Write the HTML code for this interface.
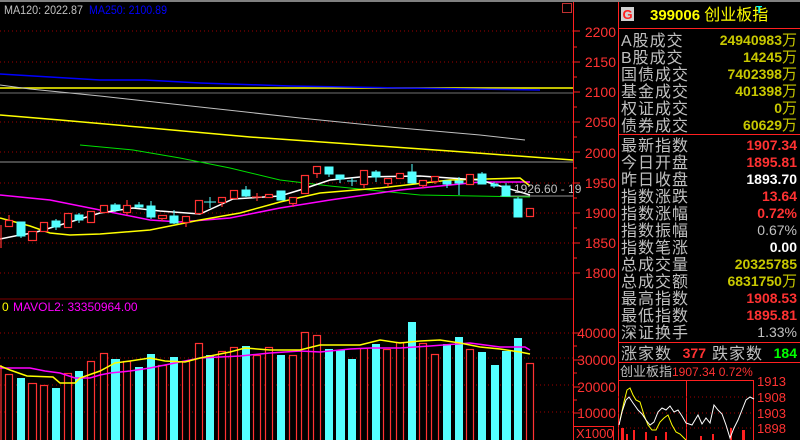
<!DOCTYPE html>
<html><head><meta charset="utf-8"><style>
html,body{margin:0;padding:0;background:#000;width:800px;height:440px;overflow:hidden}
svg{display:block}
.l{font-family:"Liberation Sans","Noto Sans CJK SC",sans-serif;font-size:16px;fill:#c0c0c0;letter-spacing:1px}
.v{font-family:"Liberation Sans",sans-serif;font-size:14px;font-weight:bold;text-anchor:end}
.ax{font-family:"Liberation Sans",sans-serif;font-size:14px;fill:#ff3232}
</style></head><body>
<svg width="800" height="440" viewBox="0 0 800 440" xmlns="http://www.w3.org/2000/svg">
<rect width="800" height="440" fill="#000"/>
<rect x="0" y="0" width="800" height="2" fill="#808080"/>
<g stroke="#a00000" stroke-dasharray="1,3" stroke-width="1">
<line x1="0" y1="31" x2="573" y2="31"/><line x1="0" y1="62" x2="573" y2="62"/><line x1="0" y1="93" x2="573" y2="93"/>
<line x1="0" y1="122" x2="573" y2="122"/><line x1="0" y1="152" x2="573" y2="152"/><line x1="0" y1="183" x2="573" y2="183"/>
<line x1="0" y1="213" x2="573" y2="213"/><line x1="0" y1="243" x2="573" y2="243"/><line x1="0" y1="273" x2="573" y2="273"/>
<line x1="0" y1="333" x2="573" y2="333"/><line x1="0" y1="358" x2="573" y2="358"/><line x1="0" y1="385" x2="573" y2="385"/><line x1="0" y1="412" x2="573" y2="412"/>
</g>
<line x1="0" y1="299" x2="573" y2="299" stroke="#800000"/>
<text x="4" y="14" font-family="Liberation Sans" font-size="12" fill="#c0c0c0" textLength="79" lengthAdjust="spacingAndGlyphs">MA120: 2022.87</text>
<text x="89" y="14" font-family="Liberation Sans" font-size="12" fill="#0000ff" textLength="78" lengthAdjust="spacingAndGlyphs">MA250: 2100.89</text>
<rect x="562.5" y="3.5" width="9" height="9" fill="none" stroke="#c03030"/>
<line x1="0" y1="88" x2="573" y2="88" stroke="#ffff00" stroke-width="1.5"/>
<line x1="0" y1="93" x2="573" y2="93" stroke="#707070"/>
<line x1="0" y1="162" x2="573" y2="162" stroke="#909090"/>
<polyline fill="none" stroke="#0000ff" stroke-width="1.5" points="0,74 50,77 100,80 145,80 200,83 290,86 400,88 540,90"/>
<polyline fill="none" stroke="#c0c0c0" points="0,85 30,89 100,96 200,107 300,118 400,128 480,135 525,140"/>
<polyline fill="none" stroke="#ffff00" stroke-width="1.5" points="0,115 60,120 150,128 250,137 350,144 450,151 573,160"/>
<polyline fill="none" stroke="#00e000" points="80,145 133,150 180,158 230,168 280,180 330,186 420,195 530,197"/>
<line x1="500" y1="196" x2="573" y2="196" stroke="#909090"/>
<polyline fill="none" stroke="#ff00ff" stroke-width="1.5" points="0,195 50,200 100,210 150,220 180,222 230,218 280,208 330,200 400,190 480,182 530,182"/>
<polyline fill="none" stroke="#ffff00" stroke-width="1.5" points="0,218 30,226 50,233 70,235 100,234 150,230 200,220 240,213 280,202 320,193 380,188 450,180 520,178 530,186"/>
<polyline fill="none" stroke="#ffffff" stroke-width="1.5" points="0,239 20,235 33,233 50,228 100,213 133,208 160,211 200,214 233,199 280,196 300,190 330,180 360,177 420,176 480,180 530,195"/>
<g stroke="#ff3232" fill="#000" stroke-width="1.2">
<line x1="1" y1="225" x2="1" y2="248"/>
<line x1="9" y1="215" x2="9" y2="220"/><rect x="5.5" y="220.5" width="7" height="6"/>
<rect x="28.5" y="231.5" width="8" height="9"/>
<rect x="40.5" y="222.5" width="7" height="9"/>
<rect x="64.5" y="213.5" width="7" height="14"/>
<rect x="87.5" y="211.5" width="7" height="11"/>
<rect x="100.5" y="205.5" width="7" height="7"/>
<line x1="127" y1="200" x2="127" y2="215"/><rect x="123.5" y="205.5" width="7" height="7"/>
<line x1="162" y1="218" x2="162" y2="221"/><rect x="158.5" y="215.5" width="8" height="3"/>
<line x1="186" y1="222" x2="186" y2="227"/><rect x="182.5" y="216.5" width="7" height="6"/>
<rect x="195.5" y="200.5" width="7" height="13"/>
<line x1="222" y1="202" x2="222" y2="207"/><rect x="218.5" y="197.5" width="7" height="5"/>
<rect x="230.5" y="190.5" width="7" height="8"/>
<line x1="252" y1="197" x2="262" y2="197"/><line x1="257" y1="193" x2="257" y2="201"/>
<rect x="265.5" y="194.5" width="7" height="3"/>
<line x1="293" y1="203" x2="293" y2="207"/><rect x="289.5" y="197.5" width="7" height="6"/>
<rect x="301.5" y="175.5" width="7" height="18"/>
<line x1="317" y1="173" x2="317" y2="178"/><rect x="313.5" y="166.5" width="7" height="7"/>
<line x1="364" y1="184" x2="364" y2="188"/><rect x="360.5" y="170.5" width="7" height="14"/>
<line x1="388" y1="183" x2="388" y2="187"/><rect x="384.5" y="178.5" width="7" height="5"/>
<rect x="396.5" y="173.5" width="7" height="5"/>
<line x1="423" y1="185" x2="423" y2="188"/><rect x="419.5" y="180.5" width="7" height="5"/>
<line x1="435" y1="181" x2="435" y2="184"/><rect x="431.5" y="176.5" width="7" height="5"/>
<rect x="466.5" y="174.5" width="7" height="10"/>
<rect x="526.5" y="208.5" width="7" height="8"/>
</g>
<g stroke="#54ffff" fill="#54ffff" stroke-width="1">
<rect x="17" y="222" width="8" height="14"/><line x1="21" y1="236" x2="21" y2="238"/>
<rect x="52" y="221" width="8" height="6"/><line x1="56" y1="219" x2="56" y2="230"/>
<rect x="75" y="215" width="8" height="5"/><line x1="79" y1="213" x2="79" y2="223"/>
<rect x="111" y="205" width="9" height="5"/><line x1="115" y1="203" x2="115" y2="212"/>
<rect x="135" y="205" width="8" height="2"/><line x1="139" y1="202" x2="139" y2="208"/>
<rect x="147" y="206" width="8" height="11"/><line x1="151" y1="201" x2="151" y2="219"/>
<rect x="170" y="216" width="8" height="7"/><line x1="174" y1="210" x2="174" y2="224"/>
<line x1="204" y1="202" x2="216" y2="202"/><line x1="210" y1="197" x2="210" y2="208"/>
<rect x="242" y="190" width="8" height="6"/><line x1="246" y1="186" x2="246" y2="197"/>
<rect x="277" y="191" width="8" height="9"/>
<rect x="325" y="167" width="8" height="7"/><line x1="329" y1="167" x2="329" y2="177"/>
<rect x="336" y="175" width="8" height="4"/><line x1="340" y1="175" x2="340" y2="183"/>
<line x1="347" y1="181" x2="357" y2="181"/><line x1="352" y1="178" x2="352" y2="186"/>
<rect x="372" y="172" width="8" height="5"/><line x1="376" y1="170" x2="376" y2="182"/>
<rect x="408" y="172" width="8" height="11"/><line x1="412" y1="164" x2="412" y2="183"/>
<rect x="443" y="181" width="8" height="3"/><line x1="447" y1="181" x2="447" y2="188"/>
<rect x="455" y="181" width="8" height="2"/><line x1="459" y1="177" x2="459" y2="195"/>
<rect x="478" y="174" width="8" height="10"/><line x1="482" y1="172" x2="482" y2="184"/>
<rect x="491" y="184" width="7" height="2"/><line x1="494" y1="182" x2="494" y2="188"/>
<rect x="502" y="186" width="8" height="10"/><line x1="506" y1="183" x2="506" y2="196"/>
<rect x="514" y="199" width="8" height="18"/><line x1="518" y1="197" x2="518" y2="217"/>
</g>
<text x="514" y="193" font-family="Liberation Sans" font-size="12" fill="#c0c0c0">1926.60 - 19</text>
<text x="2" y="311" font-family="Liberation Sans" font-size="12" fill="#ffff00">0</text>
<text x="13" y="311" font-family="Liberation Sans" font-size="12" fill="#ff00ff">MAVOL2: 33350964.00</text>
<g stroke="#ff3232" fill="#000" stroke-width="1.2">
<line x1="1" y1="365" x2="1" y2="440"/>
<rect x="5.5" y="374.5" width="7" height="70"/><rect x="28.5" y="383.5" width="8" height="60"/><rect x="40.5" y="385.5" width="7" height="60"/>
<rect x="64.5" y="373.5" width="7" height="70"/><rect x="87.5" y="361.5" width="7" height="80"/><rect x="100.5" y="353.5" width="7" height="90"/>
<rect x="123.5" y="361.5" width="7" height="80"/><rect x="158.5" y="365.5" width="8" height="80"/><rect x="182.5" y="361.5" width="7" height="80"/>
<rect x="195.5" y="343.5" width="7" height="100"/><rect x="218.5" y="351.5" width="7" height="90"/><rect x="230.5" y="347.5" width="7" height="95"/>
<rect x="253.5" y="355.5" width="7" height="90"/><rect x="265.5" y="347.5" width="7" height="95"/><rect x="289.5" y="355.5" width="7" height="90"/>
<rect x="301.5" y="332.5" width="7" height="110"/><rect x="313.5" y="335.5" width="7" height="110"/><rect x="360.5" y="348.5" width="7" height="95"/>
<rect x="383.5" y="349.5" width="7" height="95"/><rect x="396.5" y="342.5" width="7" height="100"/><rect x="419.5" y="343.5" width="7" height="100"/>
<rect x="431.5" y="354.5" width="7" height="90"/><rect x="466.5" y="349.5" width="7" height="95"/><rect x="526.5" y="363.5" width="7" height="80"/>
</g>
<g fill="#54ffff">
<rect x="17" y="378" width="8" height="62"/><rect x="52" y="388" width="8" height="52"/><rect x="75" y="371" width="8" height="69"/>
<rect x="111" y="359" width="9" height="81"/><rect x="135" y="367" width="8" height="73"/><rect x="147" y="354" width="8" height="86"/>
<rect x="170" y="357" width="8" height="83"/><rect x="206" y="355" width="8" height="85"/><rect x="242" y="346" width="8" height="94"/>
<rect x="277" y="355" width="8" height="85"/><rect x="325" y="349" width="8" height="91"/><rect x="336" y="350" width="9" height="90"/>
<rect x="348" y="359" width="8" height="81"/><rect x="372" y="344" width="8" height="96"/><rect x="408" y="322" width="8" height="118"/>
<rect x="443" y="344" width="8" height="96"/><rect x="455" y="337" width="8" height="103"/><rect x="478" y="352" width="8" height="88"/>
<rect x="491" y="365" width="8" height="75"/><rect x="502" y="351" width="9" height="89"/><rect x="514" y="338" width="8" height="102"/>
</g>
<polyline fill="none" stroke="#ff00ff" stroke-width="1.5" points="0,368 30,368 45,371 60,373 75,378 90,378 100,375 110,373 130,371 150,368 180,362 200,358 240,356 270,353 300,351 320,352 350,349 370,348 400,348 430,346 470,343 500,347 525,347 530,350"/>
<polyline fill="none" stroke="#ffff00" stroke-width="1.5" points="0,366 10,370 27,376 53,377 60,383 75,383 80,378 100,371 115,363 130,361 150,358 165,361 185,362 200,358 230,352 245,348 270,350 300,350 320,345 360,345 380,340 400,343 420,341 440,340 460,343 480,347 500,349 520,352 530,354"/>
<line x1="573.5" y1="2" x2="573.5" y2="440" stroke="#ff2020"/>
<g stroke="#ff2020">
<line x1="573" y1="31" x2="580" y2="31"/><line x1="573" y1="62" x2="580" y2="62"/><line x1="573" y1="92" x2="580" y2="92"/><line x1="573" y1="122" x2="580" y2="122"/><line x1="573" y1="152" x2="580" y2="152"/><line x1="573" y1="183" x2="580" y2="183"/><line x1="573" y1="213" x2="580" y2="213"/><line x1="573" y1="243" x2="580" y2="243"/><line x1="573" y1="273" x2="580" y2="273"/>
<line x1="573" y1="47" x2="577" y2="47"/><line x1="573" y1="77" x2="577" y2="77"/><line x1="573" y1="107" x2="577" y2="107"/><line x1="573" y1="137" x2="577" y2="137"/><line x1="573" y1="168" x2="577" y2="168"/><line x1="573" y1="198" x2="577" y2="198"/><line x1="573" y1="228" x2="577" y2="228"/><line x1="573" y1="258" x2="577" y2="258"/>
<line x1="573" y1="333" x2="580" y2="333"/><line x1="573" y1="360" x2="580" y2="360"/><line x1="573" y1="387" x2="580" y2="387"/><line x1="573" y1="413" x2="580" y2="413"/>
<line x1="573" y1="346" x2="577" y2="346"/><line x1="573" y1="373" x2="577" y2="373"/><line x1="573" y1="400" x2="577" y2="400"/>
</g>
<g class="ax" text-anchor="end">
<text x="616" y="37">2200</text><text x="616" y="67">2150</text><text x="616" y="97">2100</text><text x="616" y="127">2050</text><text x="616" y="158">2000</text><text x="616" y="188">1950</text><text x="616" y="218">1900</text><text x="616" y="248">1850</text><text x="616" y="278">1800</text>
<text x="616" y="338">40000</text><text x="616" y="365">30000</text><text x="616" y="392">20000</text><text x="616" y="418">10000</text>
</g>
<rect x="573.5" y="426.5" width="40" height="14" fill="none" stroke="#ff2020"/>
<text x="576" y="438" font-family="Liberation Sans" font-size="13" fill="#ff3232">X1000</text>
<line x1="618.5" y1="2" x2="618.5" y2="440" stroke="#ff2020"/>
<rect x="621" y="7" width="13" height="14" fill="#d0d0d0"/>
<text x="627.5" y="19" font-family="Liberation Sans" font-size="13" font-weight="bold" fill="#ff2020" text-anchor="middle">G</text>
<text x="650" y="20" font-family="Liberation Sans,'Noto Sans CJK SC',sans-serif" font-size="15" font-weight="bold" fill="#ffff00">399006 <tspan font-weight="normal" font-size="16">创业板指</tspan></text>
<text x="756" y="13" font-family="Liberation Sans" font-size="10" font-weight="bold" fill="#00ffff">T</text>
<line x1="618" y1="28.5" x2="800" y2="28.5" stroke="#ff2020"/>
<g class="l">
<text x="621" y="46">A股成交</text><text x="621" y="63">B股成交</text><text x="621" y="80">国债成交</text><text x="621" y="97">基金成交</text><text x="621" y="114">权证成交</text><text x="621" y="131">债券成交</text>
<text x="621" y="151">最新指数</text><text x="621" y="168">今日开盘</text><text x="621" y="185">昨日收盘</text><text x="621" y="202">指数涨跌</text><text x="621" y="219">指数涨幅</text><text x="621" y="236">指数振幅</text><text x="621" y="253">指数笔涨</text><text x="621" y="270">总成交量</text><text x="621" y="287">总成交额</text><text x="621" y="304">最高指数</text><text x="621" y="321">最低指数</text><text x="621" y="338">深证换手</text>
<text x="621" y="359">涨家数</text><text x="712" y="359">跌家数</text>
</g>
<g class="v">
<text x="797" y="45" fill="#c8c800">24940983<tspan font-weight="normal" font-size="15" font-family="Noto Sans CJK SC">万</tspan></text>
<text x="797" y="62" fill="#c8c800">14245<tspan font-weight="normal" font-size="15" font-family="Noto Sans CJK SC">万</tspan></text>
<text x="797" y="79" fill="#c8c800">7402398<tspan font-weight="normal" font-size="15" font-family="Noto Sans CJK SC">万</tspan></text>
<text x="797" y="96" fill="#c8c800">401398<tspan font-weight="normal" font-size="15" font-family="Noto Sans CJK SC">万</tspan></text>
<text x="797" y="113" fill="#c8c800">0<tspan font-weight="normal" font-size="15" font-family="Noto Sans CJK SC">万</tspan></text>
<text x="797" y="130" fill="#c8c800">60629<tspan font-weight="normal" font-size="15" font-family="Noto Sans CJK SC">万</tspan></text>
<text x="797" y="150" fill="#ff3232">1907.34</text>
<text x="797" y="167" fill="#ff3232">1895.81</text>
<text x="797" y="184" fill="#ffffff">1893.70</text>
<text x="797" y="201" fill="#ff3232">13.64</text>
<text x="797" y="218" fill="#ff3232">0.72%</text>
<text x="797" y="235" fill="#c0c0c0" font-weight="normal">0.67%</text>
<text x="797" y="252" fill="#ffffff">0.00</text>
<text x="797" y="269" fill="#c8c800">20325785</text>
<text x="797" y="286" fill="#c8c800">6831750<tspan font-weight="normal" font-size="15" font-family="Noto Sans CJK SC">万</tspan></text>
<text x="797" y="303" fill="#ff3232">1908.53</text>
<text x="797" y="320" fill="#ff3232">1895.81</text>
<text x="797" y="337" fill="#c0c0c0" font-weight="normal">1.33%</text>
<text x="706" y="358" fill="#ff3232">377</text>
<text x="797" y="358" fill="#00ff00">184</text>
</g>
<line x1="618" y1="134.5" x2="800" y2="134.5" stroke="#ff2020"/>
<line x1="618" y1="342.5" x2="800" y2="342.5" stroke="#ff2020"/>
<line x1="618" y1="362.5" x2="800" y2="362.5" stroke="#ff2020"/>
<text x="620" y="376" font-family="Liberation Sans,'Noto Sans CJK SC',sans-serif" font-size="13" fill="#c0c0c0">创业板指</text>
<text x="672" y="376" font-family="Liberation Sans" font-size="12" fill="#ff3232">1907.34 0.72%</text>
<line x1="618" y1="380.5" x2="754" y2="380.5" stroke="#ff2020"/>
<line x1="753.5" y1="380" x2="753.5" y2="440" stroke="#ff2020"/>
<line x1="686.5" y1="380" x2="686.5" y2="440" stroke="#ff2020"/>
<g stroke="#a00000" stroke-dasharray="1,3"><line x1="618" y1="397" x2="753" y2="397"/><line x1="618" y1="413" x2="753" y2="413"/><line x1="618" y1="428" x2="753" y2="428"/></g>
<g font-family="Liberation Sans" font-size="13" fill="#ff3232"><text x="757" y="386">1913</text><text x="757" y="402">1908</text><text x="757" y="418">1903</text><text x="757" y="433">1898</text></g>
<g fill="#ff2020"><rect x="621" y="428" width="3" height="12"/><rect x="626" y="434" width="2" height="6"/><rect x="633" y="430" width="2" height="10"/><rect x="645" y="432" width="2" height="8"/><rect x="655" y="436" width="2" height="4"/><rect x="665" y="432" width="2" height="8"/><rect x="700" y="436" width="2" height="4"/><rect x="712" y="434" width="2" height="6"/><rect x="730" y="428" width="2" height="12"/><rect x="742" y="430" width="3" height="10"/></g>
<polyline fill="none" stroke="#ffff00" points="620,420 624,402 627,390 630,388 633,395 636,400 640,402 644,415 648,425 652,430 656,430 660,422 664,418 668,415 672,425 676,432 680,434 686,440"/>
<polyline fill="none" stroke="#ffffff" points="619,425 622,412 626,400 629,397 633,403 638,410 642,414 646,420 650,425 654,422 658,412 662,408 666,410 670,406 674,412 678,410 682,416 686,423 692,425 698,415 702,424 706,418 710,423 714,405 718,410 722,414 726,425 730,438 734,428 738,420 742,410 746,400 750,397 754,399"/>
</svg>
</body></html>
